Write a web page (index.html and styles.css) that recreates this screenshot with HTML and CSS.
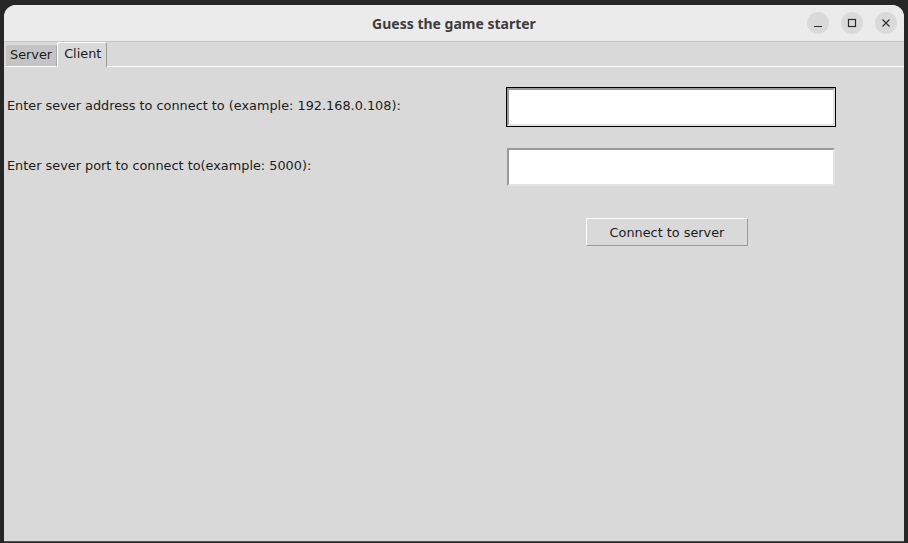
FILE: index.html
```html
<!DOCTYPE html>
<html>
<head>
<meta charset="utf-8">
<link rel="stylesheet" href="styles.css">
</head>
<body>
<div class="window">
  <div class="titlebar">
    <div class="title">Guess the game starter</div>
    <div class="controls">
      <div class="ctl"><svg width="10" height="10" viewBox="0 0 10 10"><path d="M1 8.5h8" stroke="#2e2e2e" stroke-width="1.2"/></svg></div>
      <div class="ctl"><svg width="10" height="10" viewBox="0 0 10 10"><rect x="1.5" y="1.5" width="7" height="7" fill="none" stroke="#2e2e2e" stroke-width="1.2"/></svg></div>
      <div class="ctl"><svg width="10" height="10" viewBox="0 0 10 10"><path d="M1.5 1.5l7 7M8.5 1.5l-7 7" stroke="#2e2e2e" stroke-width="1.2"/></svg></div>
    </div>
  </div>
  <div class="tabs">
    <div class="tab">Server</div>
    <div class="tab active">Client</div>
    <div class="tabfill"></div>
  </div>
  <div class="panel">
    <div class="form">
      <div class="label">Enter sever address to connect to (example: 192.168.0.108):</div>
      <div class="entry focus"><div class="field"></div></div>
      <div class="label">Enter sever port to connect to(example: 5000):</div>
      <div class="entry"><div class="field"></div></div>
      <div></div>
      <div class="btnrow"><div class="button">Connect to server</div></div>
    </div>
  </div>
</div>
</body>
</html>
```
FILE: styles.css
```css
html, body {
  margin: 0;
  padding: 0;
  background: #262626;
  width: 908px;
  height: 543px;
  overflow: hidden;
}
.window {
  margin: 5px 0 0 4px;
  width: 900px;
  height: 537px;
  background: #d9d9d9;
  border-radius: 12px 12px 0 0;
  overflow: hidden;
  display: flex;
  flex-direction: column;
  border-bottom: 1px solid #555;
  box-sizing: border-box;
}
.titlebar {
  height: 36px;
  background: #ebebeb;
  border-bottom: 1px solid #c4c4c4;
  display: flex;
  align-items: center;
  justify-content: center;
  position: relative;
  flex: none;
}
.title {
  font-family: "Noto Sans", "DejaVu Sans", sans-serif;
  font-weight: bold;
  font-size: 14px;
  color: #3d3d3d;
  margin-top: 1px;
}
.controls {
  position: absolute;
  right: 7px;
  top: 7px;
  display: flex;
  gap: 12px;
}
.ctl {
  width: 22px;
  height: 22px;
  border-radius: 50%;
  background: #dadada;
  display: flex;
  align-items: center;
  justify-content: center;
}
.tabs {
  display: flex;
  align-items: flex-end;
  height: 25px;
  padding-left: 1px;
  flex: none;
  font-family: "DejaVu Sans", sans-serif;
  font-size: 12.85px;
  color: #1c1c1c;
}
.tab {
  height: 23px;
  box-sizing: border-box;
  padding: 0 4px 0 4px;
  background: #c4c4c4;
  border: 1px solid #d9d9d9;
  border-right-color: #a8a8a8;
  border-bottom: 1px solid #ffffff;
  border-radius: 3px 3px 0 0;
  line-height: 20px;
}
.tab.active {
  height: 25px;
  background: #d9d9d9;
  border: 1px solid #ffffff;
  border-right-color: #9a9a9a;
  border-bottom: none;
  padding: 0 5px 0 6px;
  line-height: 22px;
}
.tabfill {
  flex: 1;
  height: 1px;
  background: #ffffff;
}
.panel {
  flex: 1;
  padding: 20px 0 0 3px;
}
.form {
  display: grid;
  grid-template-columns: 499px 330px;
  row-gap: 20px;
  align-items: center;
  font-family: "DejaVu Sans", sans-serif;
  font-size: 12.85px;
  color: #1c1c1c;
}
.label {
  white-space: nowrap;
  padding-bottom: 3px;
}
.entry {
  border: 1px solid #d9d9d9;
  height: 40px;
  box-sizing: border-box;
}
.entry.focus {
  border-color: #000000;
}
.field {
  height: 100%;
  box-sizing: border-box;
  background: #ffffff;
  border: 2px solid;
  border-color: #9a9a9a #e3e3e3 #e3e3e3 #9a9a9a;
}
.btnrow {
  padding-left: 80px;
  margin-top: 11px;
}
.button {
  width: 162px;
  height: 28px;
  box-sizing: border-box;
  border: 1px solid;
  border-color: #ffffff #9a9a9a #9a9a9a #ffffff;
  background: #d9d9d9;
  display: flex;
  align-items: center;
  justify-content: center;
}
```
